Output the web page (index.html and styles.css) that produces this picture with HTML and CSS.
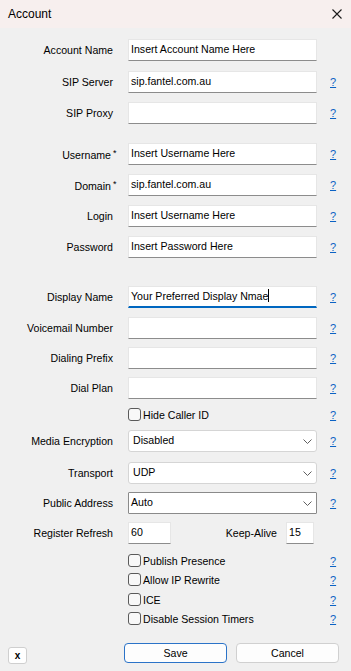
FILE: index.html
```html
<!DOCTYPE html>
<html>
<head>
<meta charset="utf-8">
<link rel="stylesheet" href="styles.css">
</head>
<body>
<div class="window">
  <div class="titlebar">
    <span class="title">Account</span>
    <svg class="close" width="10" height="10" viewBox="0 0 10 10"><path d="M0.5 0.5 L9.5 9.5 M9.5 0.5 L0.5 9.5" stroke="#1a1a1a" stroke-width="1.1" fill="none"/></svg>
  </div>
  <div class="form">
    <div class="row m11"><span class="label">Account Name</span><div class="field">Insert Account Name Here</div><span></span></div>
    <div class="row m10"><span class="label">SIP Server</span><div class="field">sip.fantel.com.au</div><a class="help">?</a></div>
    <div class="row m9"><span class="label">SIP Proxy</span><div class="field"></div><a class="help">?</a></div>

    <div class="row m19"><span class="label">Username<span class="req">*</span></span><div class="field">Insert Username Here</div><a class="help">?</a></div>
    <div class="row m9"><span class="label">Domain<span class="req">*</span></span><div class="field">sip.fantel.com.au</div><a class="help">?</a></div>
    <div class="row m9"><span class="label">Login</span><div class="field">Insert Username Here</div><a class="help">?</a></div>
    <div class="row m9"><span class="label">Password</span><div class="field">Insert Password Here</div><a class="help">?</a></div>

    <div class="row m28"><span class="label">Display Name</span><div class="field focused">Your Preferred Display Nmae<span class="caret"></span></div><a class="help">?</a></div>
    <div class="row m9"><span class="label">Voicemail Number</span><div class="field"></div><a class="help">?</a></div>
    <div class="row m8"><span class="label">Dialing Prefix</span><div class="field"></div><a class="help">?</a></div>
    <div class="row m8"><span class="label">Dial Plan</span><div class="field"></div><a class="help">?</a></div>
    <div class="row cbrow m9"><span></span><div class="check"><span class="box"></span>Hide Caller ID</div><a class="help">?</a></div>

    <div class="row m9"><span class="label">Media Encryption</span><div class="select"><span>Disabled</span><svg width="9" height="5" viewBox="0 0 9 5"><path d="M0.5 0.5 L4.5 4.5 L8.5 0.5" stroke="#5f5f5f" stroke-width="1" fill="none"/></svg></div><a class="help">?</a></div>
    <div class="row m10"><span class="label">Transport</span><div class="select"><span>UDP</span><svg width="9" height="5" viewBox="0 0 9 5"><path d="M0.5 0.5 L4.5 4.5 L8.5 0.5" stroke="#5f5f5f" stroke-width="1" fill="none"/></svg></div><a class="help">?</a></div>
    <div class="row m8"><span class="label">Public Address</span><div class="select dark"><span>Auto</span><svg width="9" height="5" viewBox="0 0 9 5"><path d="M0.5 0.5 L4.5 4.5 L8.5 0.5" stroke="#5f5f5f" stroke-width="1" fill="none"/></svg></div><a class="help">?</a></div>
    <div class="row m8"><span class="label">Register Refresh</span>
      <div class="pair">
        <div class="field small">60</div>
        <span class="ka-label">Keep-Alive</span>
        <div class="field tiny">15</div>
      </div><span></span></div>

    <div class="row cbrow m10"><span></span><div class="check"><span class="box"></span>Publish Presence</div><a class="help">?</a></div>
    <div class="row cbrow m6"><span></span><div class="check"><span class="box"></span>Allow IP Rewrite</div><a class="help">?</a></div>
    <div class="row cbrow m7"><span></span><div class="check"><span class="box"></span>ICE</div><a class="help">?</a></div>
    <div class="row cbrow m6"><span></span><div class="check"><span class="box"></span>Disable Session Timers</div><a class="help">?</a></div>

    <div class="buttons">
      <div class="btn xbtn">x</div>
      <div class="btn primary">Save</div>
      <div class="btn">Cancel</div>
    </div>
  </div>
</div>
</body>
</html>
```

FILE: styles.css
```css
html, body {
  margin: 0;
  padding: 0;
}
body {
  width: 351px;
  height: 671px;
  background: #f0f0f0;
  font-family: "Liberation Sans", Arial, sans-serif;
  font-size: 10.6px;
  color: #000;
  overflow: hidden;
}
.titlebar {
  height: 28px;
  background: #f7efee;
  display: flex;
  align-items: center;
  justify-content: space-between;
  padding: 0 9px 0 8px;
}
.title {
  font-size: 12px;
  color: #000;
}
.form {
  display: flex;
  flex-direction: column;
}
.row {
  display: grid;
  grid-template-columns: 113px 189px 1fr;
  column-gap: 15px;
  align-items: center;
  height: 22px;
}
.cbrow { height: 13px; }
.m6 { margin-top: 6px; }
.m7 { margin-top: 7px; }
.m8 { margin-top: 8px; }
.m9 { margin-top: 9px; }
.m10 { margin-top: 10px; }
.m11 { margin-top: 11px; }
.m19 { margin-top: 19px; }
.m28 { margin-top: 28px; }
.label {
  text-align: right;
  white-space: nowrap;
  color: #000;
}
.req {
  display: inline-block;
  width: 0;
  margin-left: 2px;
  font-size: 9px;
  vertical-align: 3px;
}
.field {
  box-sizing: border-box;
  height: 22px;
  background: #fff;
  border: 1px solid #e6e6e6;
  border-bottom-color: #8c8c8c;
  padding: 0 2px;
  line-height: 18px;
  white-space: nowrap;
  overflow: hidden;
}
.field.focused {
  border-bottom: 2px solid #0067c0;
  line-height: 18px;
}
.caret {
  display: inline-block;
  width: 1px;
  height: 13px;
  background: #000;
  vertical-align: -2px;
}
.help {
  color: #0b62c4;
  text-decoration: underline;
  font-size: 11px;
  margin-left: -2px;
}
.check {
  display: flex;
  align-items: center;
  gap: 2px;
  white-space: nowrap;
}
.box {
  box-sizing: border-box;
  width: 13px;
  height: 13px;
  border: 1px solid #5a5a5a;
  border-radius: 3px;
  background: #f8f8f8;
}
.select {
  box-sizing: border-box;
  height: 22px;
  background: #fff;
  border: 1px solid #d5d5d5;
  border-radius: 3px;
  display: flex;
  align-items: center;
  justify-content: space-between;
  padding: 0 4px 0 4px;
  padding-bottom: 2px;
}
.select svg { margin-top: 2px; }
.select.dark {
  border-color: #8a8a8a;
  border-radius: 1px;
  padding-left: 2px;
}
.pair {
  display: flex;
  align-items: center;
}
.field.small { width: 43px; }
.field.tiny { width: 28px; }
.ka-label {
  margin-left: auto;
  margin-right: 9px;
}
.pair .field.tiny { margin-right: 3px; }
.buttons {
  display: flex;
  align-items: flex-start;
  margin-top: 18px;
  padding-left: 8px;
}
.btn {
  box-sizing: border-box;
  width: 103px;
  height: 20px;
  background: #fdfdfd;
  border: 1px solid #d0d0d0;
  border-radius: 4px;
  display: flex;
  align-items: center;
  justify-content: center;
  margin-left: 9px;
}
.btn.primary {
  border-color: #2b73c8;
  margin-left: 97px;
}
.xbtn {
  width: 19px;
  height: 17px;
  margin: 4px 0 0 0;
  border-radius: 3px;
  border-color: #cfcfcf;
  background: #fff;
  font-weight: bold;
  font-size: 10px;
}
```
